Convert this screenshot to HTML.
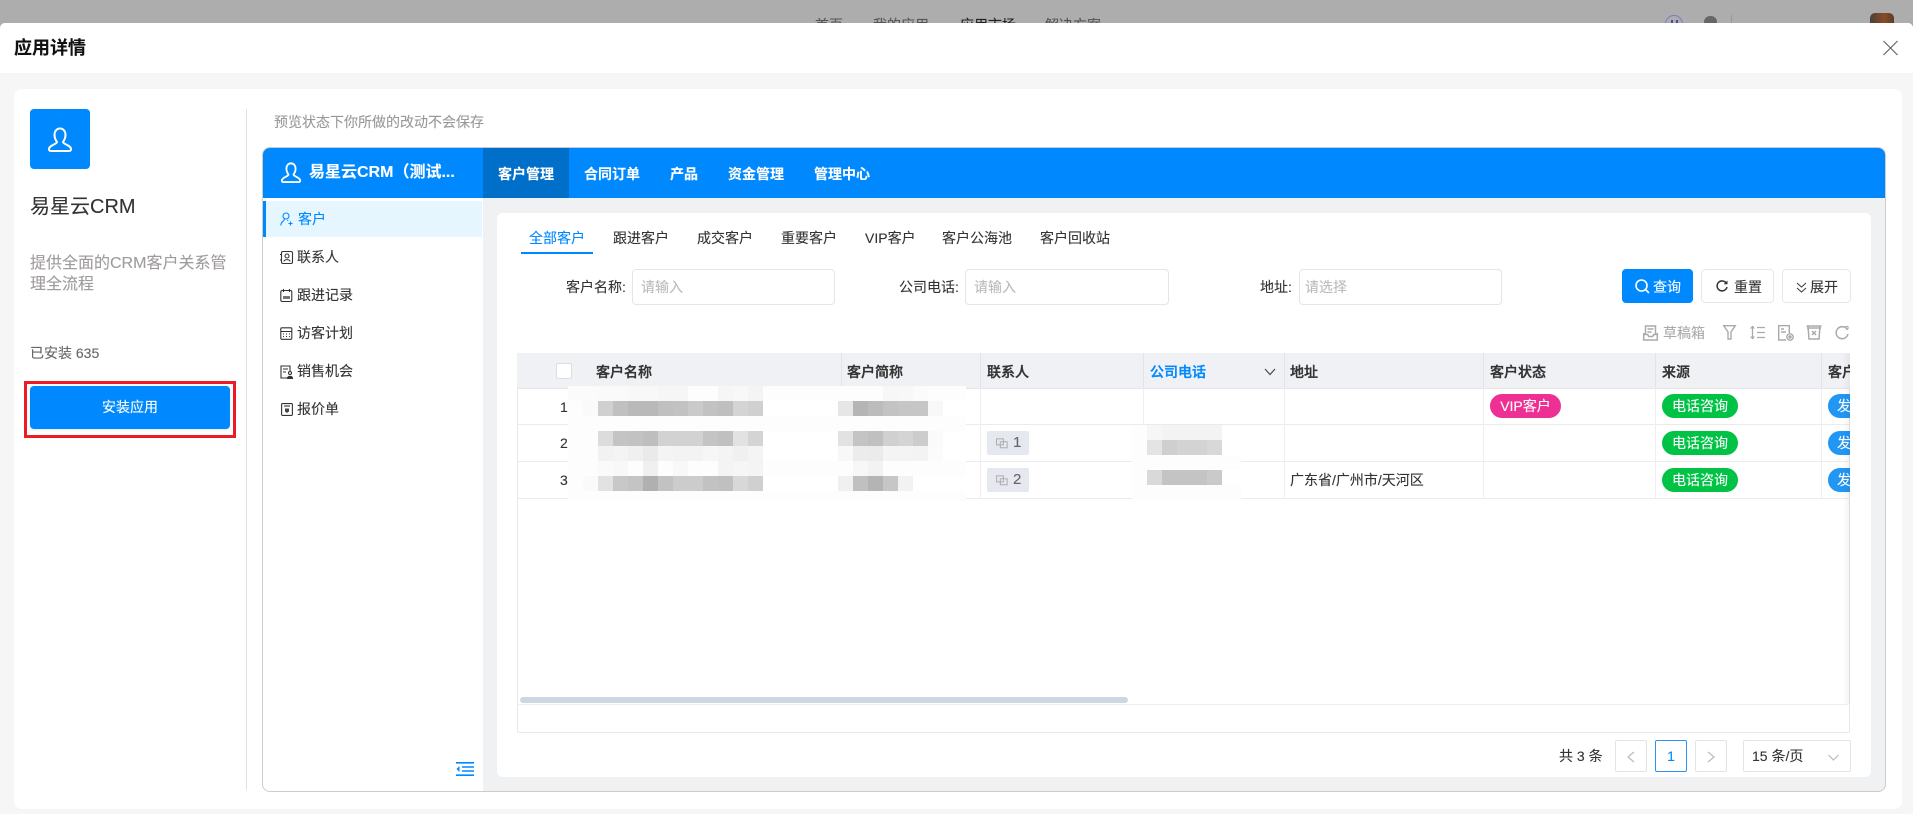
<!DOCTYPE html>
<html lang="zh-CN">
<head>
<meta charset="utf-8">
<title>应用详情</title>
<style>
*{box-sizing:border-box;margin:0;padding:0}
html,body{width:1913px;height:814px;overflow:hidden;background:#adadad}
body{position:relative;font-family:"Liberation Sans","Noto Sans CJK SC",sans-serif;font-size:14px;color:#333;-webkit-text-stroke:.12px}
.a{position:absolute}
.t{position:absolute;white-space:nowrap;line-height:20px;height:20px}
.b{font-weight:700}
.m{font-weight:500;-webkit-text-stroke:.35px}
svg{position:absolute;overflow:visible}
.input{position:absolute;top:269px;height:36px;width:203px;border:1px solid #e5e5e5;border-radius:4px;background:#fff;color:#bbb;line-height:34px;padding-left:8px}
.btn{position:absolute;top:269px;height:34px;border:1px solid #e8e8e8;border-radius:4px;background:#fff}
.sep{position:absolute;top:353px;width:1px;height:35px;background:#e2e4e8}
.vsep{position:absolute;top:388px;width:1px;height:111px;background:#eee}
.tag{position:absolute;height:24px;border-radius:12px;color:#fff;line-height:24px;text-align:center;white-space:nowrap;overflow:hidden}
.g{background:#00c244;width:76px}
.bl{background:#2196f3;width:40px;text-align:left;padding-left:9px}
.chip{position:absolute;left:987px;width:42px;height:24px;background:#e6e8f0;border-radius:2px}
.pg{position:absolute;top:740px;width:32px;height:32px;border:1px solid #e3e3e3;border-radius:2px;background:#fff}
</style>
</head>
<body>
<!-- backdrop nav -->
<div class="t" style="left:815px;top:15px;color:#555">首页</div>
<div class="t" style="left:873px;top:15px;color:#555">我的应用</div>
<div class="t" style="left:960px;top:15px;color:#222">应用市场</div>
<div class="t" style="left:1045px;top:15px;color:#555">解决方案</div>
<div class="a" style="left:1665px;top:15px;width:18px;height:18px;border:1.5px solid #7d7db8;border-radius:50%"></div>
<div class="a" style="left:1671px;top:20px;width:2px;height:3px;background:#4a4aa8"></div>
<div class="a" style="left:1676px;top:20px;width:2px;height:3px;background:#4a4aa8"></div>
<div class="a" style="left:1704px;top:16px;width:13px;height:12px;background:#666;border-radius:6px 6px 0 0"></div>
<div class="a" style="left:1731px;top:15px;width:1px;height:10px;background:#999"></div>
<div class="a" style="left:1870px;top:13px;width:24px;height:14px;background:linear-gradient(90deg,#4a4038,#8a4a28 60%,#5a3a2a);border-radius:5px 5px 0 0"></div>

<!-- modal -->
<div class="a" style="left:0;top:23px;width:1913px;height:791px;background:#f6f6f6;border-radius:5px 5px 0 0;overflow:hidden">
  <div class="a" style="left:0;top:0;width:1913px;height:50px;background:#fff"></div>
</div>
<div class="t b" style="left:14px;top:38px;font-size:18px;line-height:20px;color:#111">应用详情</div>
<svg style="left:1883px;top:41px" width="15" height="14" viewBox="0 0 15 14"><path d="M.5 0 14.500 14M14.500 0 .5 14" stroke="#666" stroke-width="1.200" fill="none"/></svg>

<!-- card -->
<div class="a" style="left:14px;top:89px;width:1888px;height:720px;background:#fff;border-radius:8px"></div>
<div class="a" style="left:30px;top:109px;width:60px;height:60px;background:#0089ff;border-radius:4px"></div>
<svg style="left:48px;top:127px" width="24" height="25" viewBox="0 0 24 25" fill="none" stroke="#fff" stroke-width="2"><path d="M12 1.500C8.500 1.500 6.500 4.500 6.500 8 6.500 11.500 9 15 9 15 9 17 1 18.500 1 22 1 24 2 24 4 24H20C22 24 23 24 23 22 23 18.500 15 17 15 15 15 15 17.500 11.500 17.500 8 17.500 4.500 15.500 1.500 12 1.500Z"/></svg>
<div class="t" style="left:30px;top:197px;font-size:20px;color:#333">易星云CRM</div>
<div class="a" style="left:30px;top:253px;width:200px;font-size:16px;line-height:21px;color:#a09c9c">提供全面的CRM客户关系管理全流程</div>
<div class="t" style="left:30px;top:343px;color:#666">已安装 635</div>
<div class="a" style="left:24px;top:381px;width:212px;height:57px;border:3px solid #ed1c24"></div>
<div class="a" style="left:30px;top:386px;width:200px;height:43px;background:#0089ff;border-radius:4px;color:#fff;text-align:center;line-height:43px;box-shadow:0 1px 3px rgba(0,0,0,.1)">安装应用</div>
<div class="a" style="left:246px;top:109px;width:1px;height:681px;background:#e2e2e2"></div>
<div class="t" style="left:274px;top:112px;color:#999">预览状态下你所做的改动不会保存</div>

<!-- frame -->
<div class="a" style="left:262px;top:147px;width:1624px;height:645px;border:1px solid #ccc;border-radius:8px;background:#f0f1f3;overflow:hidden">
  <div class="a" style="left:0;top:0;width:1622px;height:50px;background:#0089ff"></div>
  <div class="a" style="left:220px;top:0;width:86px;height:50px;background:#006fca"></div>
  <div class="a" style="left:0;top:50px;width:220px;height:594px;background:#fff"></div>
  <div class="a" style="left:0;top:53px;width:219px;height:36px;background:#e6f6ff"></div>
  <div class="a" style="left:0;top:53px;width:3px;height:36px;background:#0089ff"></div>
</div>
<svg style="left:281px;top:162px" width="20" height="21" viewBox="0 0 24 25" fill="none" stroke="#fff" stroke-width="2.200"><path d="M12 1.500C8.500 1.500 6.500 4.500 6.500 8 6.500 11.500 9 15 9 15 9 17 1 18.500 1 22 1 24 2 24 4 24H20C22 24 23 24 23 22 23 18.500 15 17 15 15 15 15 17.500 11.500 17.500 8 17.500 4.500 15.500 1.500 12 1.500Z"/></svg>
<div class="t b" style="left:309px;top:163px;font-size:16px;color:#fff">易星云CRM（测试...</div>
<div class="t b" style="left:498px;top:164px;color:#fff">客户管理</div>
<div class="t b" style="left:584px;top:164px;color:#fff">合同订单</div>
<div class="t b" style="left:670px;top:164px;color:#fff">产品</div>
<div class="t b" style="left:728px;top:164px;color:#fff">资金管理</div>
<div class="t b" style="left:814px;top:164px;color:#fff">管理中心</div>

<!-- sidebar -->
<svg style="left:280px;top:212px" width="13" height="14" viewBox="0 0 13 14" fill="none" stroke="#0089ff" stroke-width="1.100"><circle cx="6" cy="4" r="3"/><path d="M4.500 7C4.500 9 .8 9.500.8 13.500M7.500 8 8 9M10.500 9.500v4M8.500 11.500h4"/></svg>
<div class="t" style="left:298px;top:209px;color:#0089ff">客户</div>
<svg style="left:280px;top:251px" width="13" height="13" viewBox="0 0 13 13" fill="none" stroke="#333" stroke-width="1.100"><rect x="1.500" y=".5" width="11" height="12" rx="1.500"/><circle cx="7" cy="5" r="2"/><path d="M4 10.500C4 8 10 8 10 10.500M0 3.500h2M0 9h2"/></svg>
<div class="t" style="left:297px;top:247px">联系人</div>
<svg style="left:280px;top:289px" width="13" height="13" viewBox="0 0 13 13" fill="none" stroke="#333" stroke-width="1.100"><rect x=".8" y="1.500" width="11" height="11" rx="1.500"/><path d="M3.500 0v3M9.500 0v3"/><rect x="3" y="7" width="7" height="3" fill="#777" stroke="none"/></svg>
<div class="t" style="left:297px;top:285px">跟进记录</div>
<svg style="left:280px;top:327px" width="13" height="13" viewBox="0 0 13 13" fill="none" stroke="#333" stroke-width="1.100"><rect x=".8" y=".8" width="11" height="11.500" rx="1"/><path d="M.8 4.500h11M3 7h1M6 7h1M9 7h1M3 9.500h1M6 9.500h1M9 9.500h1"/></svg>
<div class="t" style="left:297px;top:323px">访客计划</div>
<svg style="left:280px;top:365px" width="14" height="14" viewBox="0 0 14 14" fill="none" stroke="#333" stroke-width="1.100"><path d="M8 13H1V1h9v5M3 4h5M3 7h3"/><circle cx="10" cy="8" r="1.500"/><path d="M7.500 13.500c0-3 5-3 5 0z" fill="#333"/></svg>
<div class="t" style="left:297px;top:361px">销售机会</div>
<svg style="left:281px;top:403px" width="12" height="13" viewBox="0 0 12 13" fill="none" stroke="#333" stroke-width="1.100"><rect x=".6" y=".6" width="10.800" height="11.800" rx="1"/><path d="M3 3h6"/><path d="M4 5.500h4v3L6 10 4 8.500z" fill="#444" stroke="none"/></svg>
<div class="t" style="left:297px;top:399px">报价单</div>
<svg style="left:456px;top:762px" width="18" height="14" viewBox="0 0 18 14" fill="none" stroke="#0089ff" stroke-width="1.600"><path d="M0 .8h18M6 5h12M6 9h12M0 13.200h18"/><path d="M3.500 4v6L.5 7z" fill="#0089ff" stroke="none"/></svg>

<!-- panel -->
<div class="a" style="left:497px;top:213px;width:1374px;height:564px;background:#fff;border-radius:6px"></div>
<div class="t" style="left:529px;top:228px;color:#0089ff">全部客户</div>
<div class="a" style="left:521px;top:252px;width:72px;height:2px;background:#0089ff"></div>
<div class="t" style="left:613px;top:228px">跟进客户</div>
<div class="t" style="left:697px;top:228px">成交客户</div>
<div class="t" style="left:781px;top:228px">重要客户</div>
<div class="t" style="left:865px;top:228px">VIP客户</div>
<div class="t" style="left:942px;top:228px">客户公海池</div>
<div class="t" style="left:1040px;top:228px">客户回收站</div>

<!-- filters -->
<div class="t" style="left:566px;top:277px">客户名称:</div>
<div class="input" style="left:632px">请输入</div>
<div class="t" style="left:899px;top:277px">公司电话:</div>
<div class="input" style="left:965px;width:204px">请输入</div>
<div class="t" style="left:1260px;top:277px">地址:</div>
<div class="input" style="left:1299px;padding-left:5px">请选择</div>

<div class="a" style="left:1622px;top:269px;width:71px;height:34px;background:#0089ff;border-radius:4px"></div>
<svg style="left:1635px;top:279px" width="15" height="15" viewBox="0 0 15 15" fill="none" stroke="#fff" stroke-width="1.600"><circle cx="6.500" cy="6.500" r="5.500"/><path d="M10.500 10.500 14 14"/></svg>
<div class="t" style="left:1653px;top:277px;color:#fff">查询</div>
<div class="btn" style="left:1701px;width:73px"></div>
<svg style="left:1716px;top:280px" width="12" height="12" viewBox="0 0 12 12" fill="none" stroke="#333" stroke-width="1.500"><path d="M10.500 3.500A5 5 0 1 0 11 7"/><path d="M11.500 .5v3.800H7.700z" fill="#333" stroke="none"/></svg>
<div class="t" style="left:1734px;top:277px">重置</div>
<div class="btn" style="left:1782px;width:69px"></div>
<svg style="left:1796px;top:282px" width="11" height="11" viewBox="0 0 11 11" fill="none" stroke="#444" stroke-width="1.100"><path d="M1 1l4.500 4L10 1M1 6l4.500 4L10 6"/></svg>
<div class="t" style="left:1810px;top:277px">展开</div>

<!-- toolbar -->
<svg style="left:1643px;top:325px" width="15" height="16" viewBox="0 0 15 16" fill="none" stroke="#aaa" stroke-width="1.500"><path d="M2.500 9V1h10v8M.7 8v7h13.600V8M4.500 4h6M4.500 7h4M.7 9.500h4l1 2h4l1-2h3.600"/></svg>
<div class="t" style="left:1663px;top:323px;color:#aaa">草稿箱</div>
<svg style="left:1723px;top:325px" width="13" height="15" viewBox="0 0 13 15" fill="none" stroke="#aaa" stroke-width="1.400"><path d="M.7.700h11.600L8 7v7H5V7z"/></svg>
<svg style="left:1750px;top:325px" width="15" height="15" viewBox="0 0 15 15" fill="none" stroke="#aaa" stroke-width="1.300"><path d="M7 2.500h8M7 7.500h8M7 12.500h8M2.500 1v13"/><path d="M0 3.500 2.500 .5 5 3.500zM0 11.500l2.500 3 2.500-3z" fill="#aaa" stroke="none"/></svg>
<svg style="left:1778px;top:325px" width="16" height="16" viewBox="0 0 16 16" fill="none" stroke="#aaa" stroke-width="1.400"><path d="M8 15H.7V.7h10.600V8M3 4h3M3 7h5"/><circle cx="12" cy="12" r="3.200"/><circle cx="12" cy="12" r="1" fill="#aaa"/></svg>
<svg style="left:1806px;top:325px" width="16" height="15" viewBox="0 0 16 15" fill="none" stroke="#aaa" stroke-width="1.500"><path d="M.5 1h15M2 1l1 13h10l1-13M6 6l4 4M10 6l-4 4"/><path d="M1 3h14"/></svg>
<svg style="left:1835px;top:325px" width="14" height="15" viewBox="0 0 14 15" fill="none" stroke="#aaa" stroke-width="1.500"><path d="M12.500 5A6 6 0 1 0 13 9"/><path d="M10 1.500h3v3" stroke-width="1"/></svg>

<!-- table -->
<div class="a" style="left:517px;top:353px;width:1333px;height:380px;border:1px solid #e8e8e8;border-top:0;border-radius:2px;background:#fff"></div>
<div class="a" style="left:517px;top:353px;width:1333px;height:35px;background:#f0f1f5;border-radius:2px 2px 0 0"></div>
<div class="a" style="left:517px;top:388px;width:1333px;height:1px;background:#e6e6e6"></div>
<div class="a" style="left:517px;top:424px;width:1333px;height:1px;background:#ebebeb"></div>
<div class="a" style="left:517px;top:461px;width:1333px;height:1px;background:#ebebeb"></div>
<div class="a" style="left:517px;top:498px;width:1333px;height:1px;background:#ebebeb"></div>
<div class="a" style="left:517px;top:704px;width:1333px;height:1px;background:#eee"></div>
<div class="sep" style="left:841px"></div><div class="sep" style="left:980px"></div><div class="sep" style="left:1143px"></div><div class="sep" style="left:1284px"></div><div class="sep" style="left:1483px"></div><div class="sep" style="left:1655px"></div><div class="sep" style="left:1821px"></div>
<div class="vsep" style="left:841px"></div><div class="vsep" style="left:980px"></div><div class="vsep" style="left:1143px"></div><div class="vsep" style="left:1284px"></div><div class="vsep" style="left:1483px"></div><div class="vsep" style="left:1655px"></div><div class="vsep" style="left:1821px"></div>
<div class="a" style="left:556px;top:363px;width:16px;height:16px;background:#fff;border:1px solid #ddd;border-radius:2px"></div>
<div class="t m" style="left:596px;top:362px">客户名称</div>
<div class="t m" style="left:847px;top:362px">客户简称</div>
<div class="t m" style="left:987px;top:362px">联系人</div>
<div class="t m" style="left:1150px;top:362px;color:#0089ff">公司电话</div>
<svg style="left:1264px;top:368px" width="12" height="8" viewBox="0 0 12 8" fill="none" stroke="#444" stroke-width="1.100"><path d="M1 1l5 5.500L11 1"/></svg>
<div class="t m" style="left:1290px;top:362px">地址</div>
<div class="t m" style="left:1490px;top:362px">客户状态</div>
<div class="t m" style="left:1662px;top:362px">来源</div>
<div class="a" style="left:1828px;top:353px;width:22px;height:35px;overflow:hidden"><div class="t m" style="left:0;top:9px">客户</div></div>
<div class="t" style="left:560px;top:397px">1</div>
<div class="t" style="left:560px;top:433px">2</div>
<div class="t" style="left:560px;top:470px">3</div>

<div class="chip" style="top:431px"></div>
<svg style="left:996px;top:438px" width="12" height="11" viewBox="0 0 14 12" fill="none" stroke="#aaa" stroke-width="1.100"><rect x=".6" y=".6" width="8" height="7"/><rect x="5" y="4" width="8" height="7"/></svg>
<div class="t" style="left:1013px;top:433px;font-size:15px;color:#666">1</div>
<div class="chip" style="top:468px"></div>
<svg style="left:996px;top:475px" width="12" height="11" viewBox="0 0 14 12" fill="none" stroke="#aaa" stroke-width="1.100"><rect x=".6" y=".6" width="8" height="7"/><rect x="5" y="4" width="8" height="7"/></svg>
<div class="t" style="left:1013px;top:470px;font-size:15px;color:#666">2</div>

<div class="t" style="left:1290px;top:470px">广东省/广州市/天河区</div>

<div class="tag" style="left:1490px;top:394px;width:71px;background:#ee3095">VIP客户</div>
<div class="tag g" style="left:1662px;top:394px">电话咨询</div>
<div class="tag g" style="left:1662px;top:431px">电话咨询</div>
<div class="tag g" style="left:1662px;top:468px">电话咨询</div>
<div class="a" style="left:1828px;top:388px;width:22px;height:111px;overflow:hidden">
  <div class="tag bl" style="left:0;top:6px">发</div>
  <div class="tag bl" style="left:0;top:43px">发</div>
  <div class="tag bl" style="left:0;top:80px">发</div>
</div>
<div class="a" style="left:1843px;top:353px;width:7px;height:351px;background:linear-gradient(90deg,rgba(0,0,0,0),rgba(0,0,0,.05))"></div>
<div class="a" style="left:520px;top:697px;width:608px;height:6px;background:#cdd6e2;border-radius:3px"></div>

<!-- mosaic 1 -->
<svg style="left:568px;top:386px" width="398" height="115" viewBox="0 0 398 115" shape-rendering="crispEdges">
<rect width="398" height="115" fill="#fdfdfd"/>
<g transform="translate(0,0)"><rect x="0" width="30" height="15" fill="#fbfbfb"/><rect x="30" width="30" height="15" fill="#fafafa"/><rect x="60" width="30" height="15" fill="#f8f8f8"/><rect x="90" width="30" height="15" fill="#f6f6f6"/><rect x="150" width="15" height="15" fill="#f6f6f6"/><rect x="165" width="15" height="15" fill="#f8f8f8"/><rect x="180" width="15" height="15" fill="#f4f4f4"/><rect x="315" width="15" height="15" fill="#f7f7f7"/><rect x="330" width="15" height="15" fill="#f8f8f8"/><rect x="345" width="15" height="15" fill="#fbfbfb"/></g>
<g transform="translate(0,15)"><rect x="195" width="75" height="15" fill="#fff"/><rect x="15" width="15" height="15" fill="#fafafa"/><rect x="30" width="15" height="15" fill="#d0d0d0"/><rect x="45" width="15" height="15" fill="#c0c0c0"/><rect x="60" width="30" height="15" fill="#b9b9b9"/><rect x="90" width="15" height="15" fill="#c0c0c0"/><rect x="105" width="15" height="15" fill="#c2c2c2"/><rect x="120" width="15" height="15" fill="#cacaca"/><rect x="135" width="15" height="15" fill="#c2c2c2"/><rect x="150" width="15" height="15" fill="#bfbfbf"/><rect x="165" width="15" height="15" fill="#d4d4d4"/><rect x="180" width="15" height="15" fill="#d0d0d0"/><rect x="270" width="15" height="15" fill="#e6e6e6"/><rect x="285" width="15" height="15" fill="#b5b5b5"/><rect x="300" width="15" height="15" fill="#bcbcbc"/><rect x="315" width="15" height="15" fill="#c3c3c3"/><rect x="330" width="30" height="15" fill="#c6c6c6"/><rect x="360" width="15" height="15" fill="#f8f8f8"/><rect x="375" width="23" height="15" fill="#fff"/></g>
<g transform="translate(0,45)"><rect x="195" width="75" height="30" fill="#fff"/><rect x="375" width="23" height="30" fill="#fff"/><rect x="30" width="15" height="15" fill="#dcdcdc"/><rect x="45" width="15" height="15" fill="#c4c4c4"/><rect x="60" width="15" height="15" fill="#c2c2c2"/><rect x="75" width="15" height="15" fill="#bebebe"/><rect x="90" width="45" height="15" fill="#d2d2d2"/><rect x="135" width="15" height="15" fill="#c4c4c4"/><rect x="150" width="15" height="15" fill="#c0c0c0"/><rect x="165" width="15" height="15" fill="#e2e2e2"/><rect x="180" width="15" height="15" fill="#d4d4d4"/><rect x="270" width="15" height="15" fill="#e2e2e2"/><rect x="285" width="15" height="15" fill="#c4c4c4"/><rect x="300" width="15" height="15" fill="#c0c0c0"/><rect x="315" width="15" height="15" fill="#d0d0d0"/><rect x="330" width="15" height="15" fill="#d4d4d4"/><rect x="345" width="15" height="15" fill="#cccccc"/><rect x="360" width="15" height="15" fill="#fafafa"/></g>
<g transform="translate(0,60)"><rect x="30" width="15" height="15" fill="#f2f2f2"/><rect x="45" width="15" height="15" fill="#f4f4f4"/><rect x="60" width="15" height="15" fill="#f0f0f0"/><rect x="75" width="15" height="15" fill="#eaeaea"/><rect x="90" width="15" height="15" fill="#f4f4f4"/><rect x="105" width="30" height="15" fill="#f3f3f3"/><rect x="135" width="15" height="15" fill="#f6f6f6"/><rect x="150" width="15" height="15" fill="#f4f4f4"/><rect x="165" width="15" height="15" fill="#f0f0f0"/><rect x="180" width="15" height="15" fill="#f4f4f4"/><rect x="270" width="15" height="15" fill="#f8f8f8"/><rect x="285" width="15" height="15" fill="#ececec"/><rect x="300" width="15" height="15" fill="#ebebeb"/><rect x="315" width="30" height="15" fill="#f4f4f4"/><rect x="345" width="15" height="15" fill="#f3f3f3"/><rect x="360" width="15" height="15" fill="#fbfbfb"/></g>
<g transform="translate(0,75)"><rect x="30" width="15" height="15" fill="#fafafa"/><rect x="45" width="15" height="15" fill="#f8f8f8"/><rect x="75" width="15" height="15" fill="#f0f0f0"/><rect x="105" width="15" height="15" fill="#f8f8f8"/><rect x="150" width="15" height="15" fill="#f4f4f4"/><rect x="165" width="15" height="15" fill="#f6f6f6"/><rect x="180" width="15" height="15" fill="#f4f4f4"/><rect x="285" width="15" height="15" fill="#f7f7f7"/><rect x="300" width="15" height="15" fill="#f2f2f2"/></g>
<g transform="translate(0,90)"><rect x="195" width="75" height="15" fill="#fff"/><rect x="345" width="53" height="15" fill="#fff"/><rect x="15" width="15" height="15" fill="#fafafa"/><rect x="30" width="15" height="15" fill="#e2e2e2"/><rect x="45" width="15" height="15" fill="#c8c8c8"/><rect x="60" width="15" height="15" fill="#c4c4c4"/><rect x="75" width="15" height="15" fill="#b0b0b0"/><rect x="90" width="15" height="15" fill="#c2c2c2"/><rect x="105" width="30" height="15" fill="#cccccc"/><rect x="135" width="15" height="15" fill="#c2c2c2"/><rect x="150" width="15" height="15" fill="#c0c0c0"/><rect x="165" width="15" height="15" fill="#d8d8d8"/><rect x="180" width="15" height="15" fill="#d0d0d0"/><rect x="270" width="15" height="15" fill="#f0f0f0"/><rect x="285" width="15" height="15" fill="#c0c0c0"/><rect x="300" width="15" height="15" fill="#b4b4b4"/><rect x="315" width="15" height="15" fill="#c6c6c6"/><rect x="330" width="15" height="15" fill="#f2f2f2"/></g>
</svg>

<!-- mosaic 2 -->
<svg style="left:1132px;top:425px" width="109" height="74" viewBox="0 0 109 74" shape-rendering="crispEdges">
<rect width="90" height="30" fill="#fdfdfd"/><rect y="30" width="109" height="44" fill="#fdfdfd"/>
<rect x="15" width="15" height="15" fill="#f6f6f6"/><rect x="30" width="60" height="15" fill="#f3f3f3"/>
<rect x="15" y="15" width="15" height="15" fill="#e4e4e4"/><rect x="30" y="15" width="15" height="15" fill="#cfcfcf"/><rect x="45" y="15" width="30" height="15" fill="#d3d3d3"/><rect x="75" y="15" width="15" height="15" fill="#d8d8d8"/>
<rect x="15" y="45" width="15" height="15" fill="#d9d9d9"/><rect x="30" y="45" width="45" height="15" fill="#c4c4c4"/><rect x="75" y="45" width="15" height="15" fill="#cacaca"/>
<rect x="90" y="45" width="19" height="15" fill="#fff"/>
</svg>

<!-- pagination -->
<div class="t" style="left:1559px;top:746px">共 3 条</div>
<div class="pg" style="left:1615px"></div>
<svg style="left:1627px;top:751px" width="8" height="12" viewBox="0 0 8 12" fill="none" stroke="#bbb" stroke-width="1.200"><path d="M7 1 1 6l6 5"/></svg>
<div class="pg" style="left:1655px;border-color:#2a94f4;color:#0089ff;text-align:center;line-height:30px">1</div>
<div class="pg" style="left:1695px"></div>
<svg style="left:1707px;top:751px" width="8" height="12" viewBox="0 0 8 12" fill="none" stroke="#bbb" stroke-width="1.200"><path d="M1 1l6 5-6 5"/></svg>
<div class="pg" style="left:1743px;width:108px"></div>
<div class="t" style="left:1752px;top:746px">15 条/页</div>
<svg style="left:1828px;top:754px" width="11" height="7" viewBox="0 0 11 7" fill="none" stroke="#bbb" stroke-width="1.200"><path d="M.5 1l5 5 5-5"/></svg>
</body>
</html>
